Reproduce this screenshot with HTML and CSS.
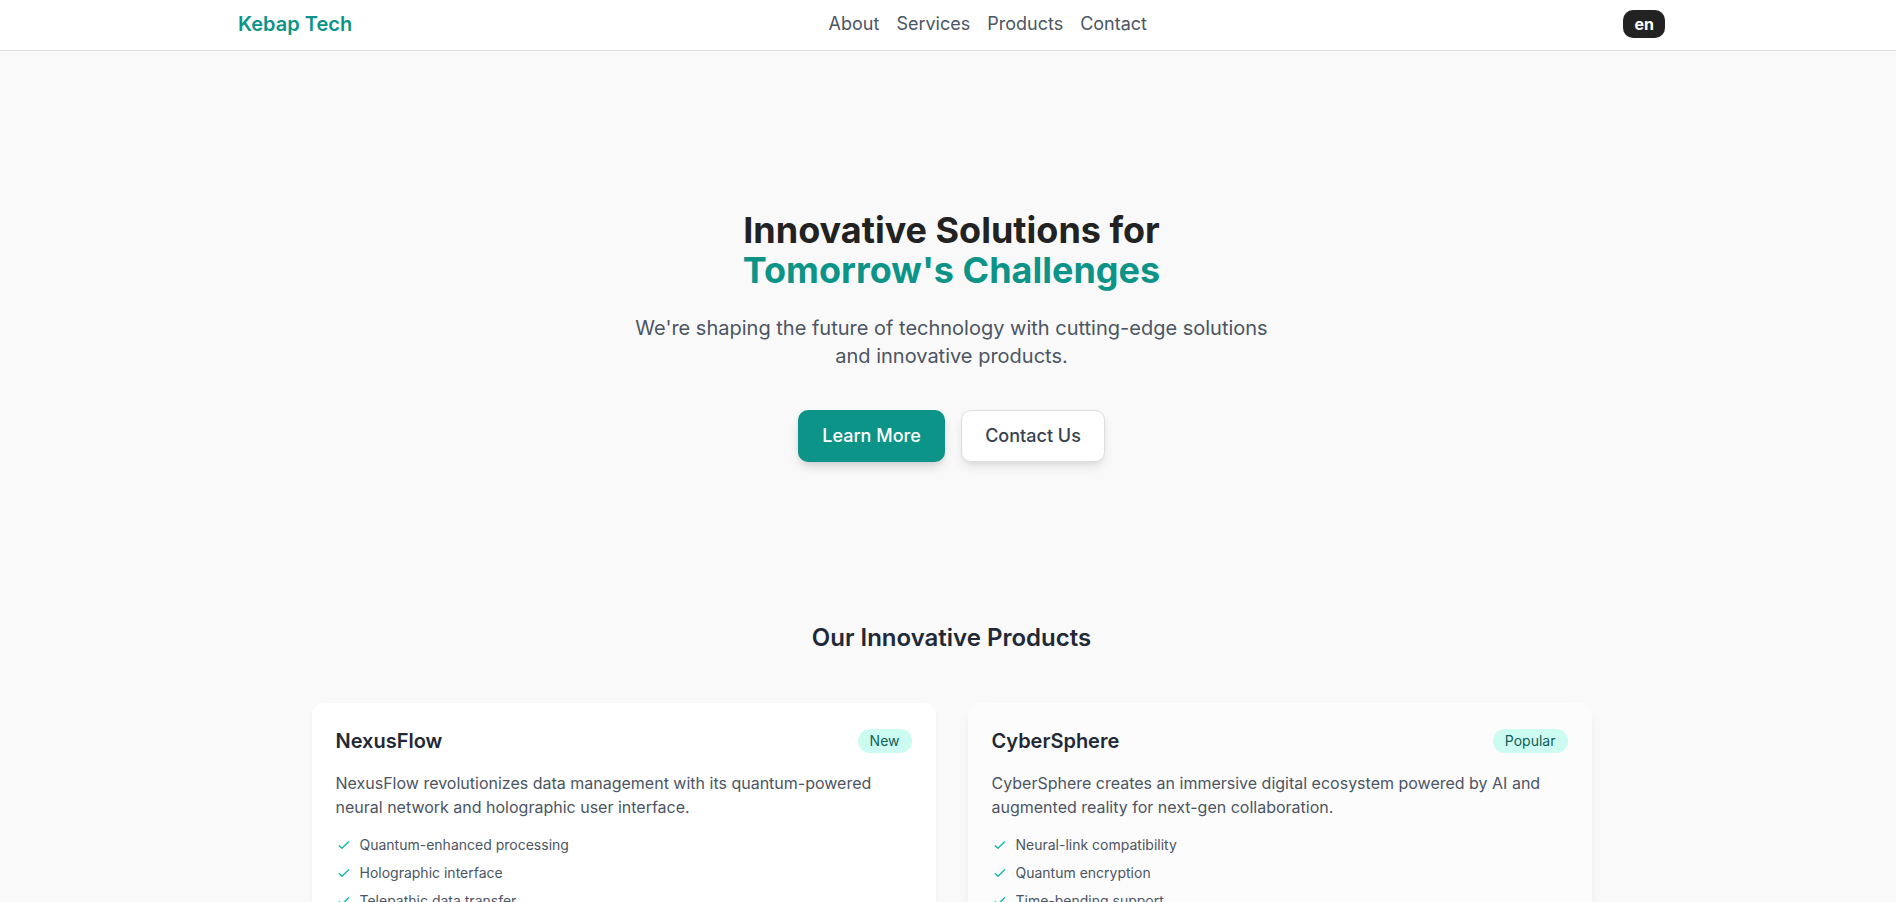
FILE: index.html
```html
<!DOCTYPE html>
<html lang="en">
<head>
<meta charset="utf-8">
<title>Kebap Tech</title>
<link rel="stylesheet" href="styles.css">
</head>
<body>
<header class="site-header">
  <div class="header-inner">
    <a class="logo" href="#">Kebap Tech</a>
    <nav class="nav">
      <a href="#">About</a>
      <a href="#">Services</a>
      <a href="#">Products</a>
      <a href="#">Contact</a>
    </nav>
    <button class="lang">en</button>
  </div>
</header>
<main class="main">
  <section class="hero">
    <h1 class="hero-title">Innovative Solutions for<br><span class="accent">Tomorrow's Challenges</span></h1>
    <p class="hero-sub">We're shaping the future of technology with cutting-edge solutions<br>and innovative products.</p>
    <div class="hero-actions">
      <a class="btn btn-primary" href="#">Learn More</a>
      <a class="btn btn-secondary" href="#">Contact Us</a>
    </div>
  </section>
  <section class="products">
    <h2 class="section-title">Our Innovative Products</h2>
    <div class="cards">
      <article class="card">
        <div class="card-head">
          <h3 class="card-title">NexusFlow</h3>
          <span class="badge">New</span>
        </div>
        <p class="card-desc">NexusFlow revolutionizes data management with its quantum-powered neural network and holographic user interface.</p>
        <ul class="features">
          <li><svg class="check" viewBox="0 0 24 24"><path d="M5 13l4 4L19 7"/></svg>Quantum-enhanced processing</li>
          <li><svg class="check" viewBox="0 0 24 24"><path d="M5 13l4 4L19 7"/></svg>Holographic interface</li>
          <li><svg class="check" viewBox="0 0 24 24"><path d="M5 13l4 4L19 7"/></svg>Telepathic data transfer</li>
        </ul>
      </article>
      <article class="card card-alt">
        <div class="card-head">
          <h3 class="card-title">CyberSphere</h3>
          <span class="badge">Popular</span>
        </div>
        <p class="card-desc">CyberSphere creates an immersive digital ecosystem powered by AI and augmented reality for next-gen collaboration.</p>
        <ul class="features">
          <li><svg class="check" viewBox="0 0 24 24"><path d="M5 13l4 4L19 7"/></svg>Neural-link compatibility</li>
          <li><svg class="check" viewBox="0 0 24 24"><path d="M5 13l4 4L19 7"/></svg>Quantum encryption</li>
          <li><svg class="check" viewBox="0 0 24 24"><path d="M5 13l4 4L19 7"/></svg>Time-bending support</li>
        </ul>
      </article>
    </div>
  </section>
</main>
</body>
</html>
```

FILE: styles.css
```css
* { box-sizing: border-box; }
html, body { margin: 0; padding: 0; }
body {
  background: #f9f9f9;
  font-family: Inter, "Noto Sans", "Liberation Sans", sans-serif;
  color: #1f2937;
  overflow: hidden;
}
a { text-decoration: none; color: inherit; }

.site-header {
  background: #ffffff;
  border-bottom: 1px solid #dcdce3;
  padding-left: 7px;
}
.header-inner {
  width: 1427px;
  margin: 0 auto;
  height: 50px;
  padding-bottom: 2px;
  display: flex;
  align-items: center;
  justify-content: space-between;
}
.logo {
  color: #0d9488;
  font-size: 20px;
  font-weight: 600;
  line-height: 28px;
}
.nav {
  display: flex;
  gap: 17px;
  font-size: 18px;
  line-height: 28px;
  color: #4b5563;
}
.lang {
  background: #222222;
  color: #ffffff;
  border: 0;
  border-radius: 10px;
  height: 28px;
  padding: 0 11px;
  font-family: inherit;
  font-size: 16px;
  font-weight: 700;
  line-height: 28px;
}

.main { padding-left: 7px; }

.hero {
  padding-top: 159px;
  text-align: center;
}
.hero-title {
  margin: 0 0 24px;
  font-size: 36px;
  line-height: 40px;
  font-weight: 700;
  color: #222222;
}
.accent { color: #0d9488; }
.hero-sub {
  margin: 0 0 40px;
  font-size: 20px;
  line-height: 28px;
  color: #4b5563;
}
.hero-actions {
  display: flex;
  justify-content: center;
  gap: 16px;
}
.btn {
  display: inline-block;
  height: 52px;
  padding: 12px 24px;
  border-radius: 10px;
  font-size: 18px;
  line-height: 28px;
  font-weight: 500;
}
.btn-primary {
  background: #0d9488;
  color: #ffffff;
  width: 147px;
  box-shadow: 0 6px 12px -2px rgba(0,0,0,0.15), 0 3px 6px -3px rgba(0,0,0,0.1);
}
.btn-secondary {
  background: #ffffff;
  color: #374151;
  border: 1px solid #dedede;
  width: 144px;
  padding: 11px 0;
  text-align: center;
  box-shadow: 0 6px 12px -2px rgba(0,0,0,0.1), 0 3px 6px -3px rgba(0,0,0,0.08);
}

.products {
  padding-top: 160px;
}
.section-title {
  margin: 0 0 49px;
  text-align: center;
  font-size: 24px;
  line-height: 32px;
  font-weight: 600;
  color: #1f2937;
}
.cards {
  width: 1280px;
  margin: 0 auto;
  display: grid;
  grid-template-columns: 1fr 1fr;
  gap: 32px;
}
.card {
  background: #ffffff;
  border-radius: 12px;
  padding: 24px;
  box-shadow: 0 4px 10px -2px rgba(0,0,0,0.06), 0 2px 4px -2px rgba(0,0,0,0.04);
  height: 240px;
}
.card-alt {
  background: #fcfcfc;
  box-shadow: 0 8px 16px -4px rgba(0,0,0,0.08), 0 3px 6px -3px rgba(0,0,0,0.05);
}
.card-head {
  display: flex;
  align-items: center;
  justify-content: space-between;
  margin-bottom: 16px;
}
.card-title {
  margin: 0;
  font-size: 20px;
  line-height: 28px;
  font-weight: 600;
  color: #1f2937;
}
.badge {
  background: #ccfbf1;
  color: #115e59;
  font-size: 14px;
  line-height: 20px;
  padding: 2px 12px;
  border-radius: 9999px;
}
.card-desc {
  margin: 0 0 16px;
  font-size: 16px;
  line-height: 24px;
  color: #4b5563;
}
.features {
  list-style: none;
  margin: 0;
  padding: 0;
  display: flex;
  flex-direction: column;
  gap: 8px;
}
.features li {
  display: flex;
  align-items: center;
  gap: 8px;
  font-size: 14px;
  line-height: 20px;
  color: #4b5563;
}
.check {
  width: 16px;
  height: 16px;
  flex: none;
  fill: none;
  stroke: #14b8a6;
  stroke-width: 2;
  stroke-linecap: round;
  stroke-linejoin: round;
}
```
